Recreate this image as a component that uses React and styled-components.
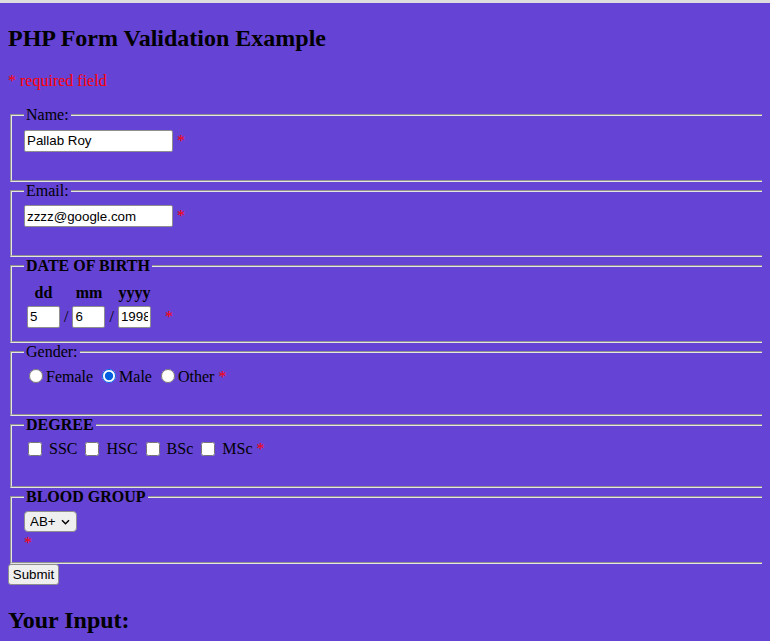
import styled, { createGlobalStyle } from "styled-components";

const GlobalStyle = createGlobalStyle`
  html {
    background: #6543d4;
    border-top: 3px solid #dedede;
    overflow: hidden;
  }
  body {
    margin: 8px;
    font-family: "Liberation Serif", "Times New Roman", serif;
    font-size: 16px;
    color: #000;
  }
`;

export default function App() {
  return (
    <>
      <GlobalStyle />
      <Title $first>PHP Form Validation Example</Title>
      <Note>
        <Required>* required field</Required>
      </Note>
      <Form onSubmit={(e) => e.preventDefault()}>
        <Fieldset>
          <Legend>Name:</Legend>
          <TextInput type="text" defaultValue="Pallab Roy" /> <Required>*</Required>
          <br />
          <br />
        </Fieldset>

        <Fieldset>
          <Legend>Email:</Legend>
          <TextInput type="text" defaultValue="zzzz@google.com" />{" "}
          <Required>*</Required>
          <br />
          <br />
        </Fieldset>

        <Fieldset>
          <Legend>
            <b>DATE OF BIRTH</b>
          </Legend>
          <DateTable>
            <tbody>
              <tr>
                <HeadCell>dd</HeadCell>
                <HeadCell />
                <HeadCell>mm</HeadCell>
                <HeadCell />
                <HeadCell>yyyy</HeadCell>
                <HeadCell />
              </tr>
              <tr>
                <Cell>
                  <DateInput type="text" defaultValue="5" />
                </Cell>
                <Cell>/</Cell>
                <Cell>
                  <DateInput type="text" defaultValue="6" />
                </Cell>
                <Cell>/</Cell>
                <Cell>
                  <DateInput type="text" defaultValue="1998" />
                </Cell>
                <StarCell>
                  <Required>*</Required>
                </StarCell>
              </tr>
            </tbody>
          </DateTable>
        </Fieldset>

        <Fieldset>
          <Legend>Gender:</Legend>
          <Radio type="radio" name="gender" />
          Female <Radio type="radio" name="gender" defaultChecked />
          Male <Radio type="radio" name="gender" />
          Other <Required>*</Required>
          <br />
          <br />
        </Fieldset>

        <Fieldset>
          <Legend>
            <b>DEGREE</b>
          </Legend>
          <Check type="checkbox" /> SSC <Check type="checkbox" /> HSC{" "}
          <Check type="checkbox" /> BSc <Check type="checkbox" /> MSc{" "}
          <Required>*</Required>
          <br />
          <br />
        </Fieldset>

        <Fieldset>
          <Legend>
            <b>BLOOD GROUP</b>
          </Legend>
          <SelectWrap>
            <Select defaultValue="AB+">
              <option>A+</option>
              <option>A-</option>
              <option>B+</option>
              <option>B-</option>
              <option>AB+</option>
              <option>AB-</option>
              <option>O+</option>
              <option>O-</option>
            </Select>
            <Chevron viewBox="0 0 9 6" aria-hidden="true">
              <path d="M1 1.2l3.5 3.5 3.5-3.5" fill="none" stroke="#000" strokeWidth="1.5" />
            </Chevron>
          </SelectWrap>
          <br />
          <Required>*</Required>
        </Fieldset>

        <SubmitButton type="submit">Submit</SubmitButton>
      </Form>

      <Title>Your Input:</Title>
    </>
  );
}

const Title = styled.h2`
  font-size: 24px;
  font-weight: bold;
  margin: ${(p) => (p.$first ? "14px 0 19.92px" : "19.92px 0")};
`;

const Note = styled.p`
  margin: 16px 0;
`;

const Required = styled.span`
  color: #ff0000;
`;

const Form = styled.form`
  display: block;
`;

const Fieldset = styled.fieldset`
  margin: 0 -60px 0 2px;
  padding: 5.6px 12px 10px;
  border: 2px groove #e4e4e4;
  border-right: none;
  min-inline-size: min-content;
`;

const Legend = styled.legend`
  padding: 0 2px;
`;

const inputBase = `
  font-family: "Liberation Sans", Arial, sans-serif;
  font-size: 13.33px;
  color: #000;
  background: #fff;
  border: 1px solid #8f8f8f;
  border-radius: 2px;
  padding: 1px 2px;
  height: 22px;
  box-sizing: border-box;
  margin: 0;
`;

const TextInput = styled.input`
  ${inputBase}
  width: 149px;
`;

const DateTable = styled.table`
  border-spacing: 2px;
  border-collapse: separate;
`;

const HeadCell = styled.th`
  padding: 1px;
  font-weight: bold;
  text-align: center;
`;

const Cell = styled.td`
  padding: 1px;
`;

const StarCell = styled.td`
  padding: 1px 1px 1px 11px;
`;

const DateInput = styled.input`
  ${inputBase}
  width: 33px;
`;

const Radio = styled.input`
  margin: 3px 3px 0 5px;
  width: 14px;
  height: 14px;
  vertical-align: -1px;
  accent-color: #0060df;
`;

const Check = styled.input`
  margin: 0 3px 0 4px;
  width: 14px;
  height: 14px;
  vertical-align: -2px;
`;

const SelectWrap = styled.span`
  position: relative;
  display: inline-block;
  vertical-align: top;
  margin-bottom: 2px;
`;

const Select = styled.select`
  display: block;
  appearance: none;
  font-family: "Liberation Sans", Arial, sans-serif;
  font-size: 13.33px;
  width: 53px;
  height: 21px;
  margin: 0;
  padding: 0 0 0 5px;
  border: 1px solid #8f8f8f;
  border-radius: 4px;
  background: #efefef;
  color: #000;
`;

const Chevron = styled.svg`
  position: absolute;
  right: 7px;
  top: 8px;
  width: 9px;
  height: 6px;
  pointer-events: none;
`;

const SubmitButton = styled.button`
  font-family: "Liberation Sans", Arial, sans-serif;
  font-size: 13.33px;
  width: 51px;
  padding: 0;
  height: 21px;
  margin: 0 0 2px;
  border: 1px solid #8f8f8f;
  border-radius: 3px;
  background: #efefef;
  color: #000;
`;
